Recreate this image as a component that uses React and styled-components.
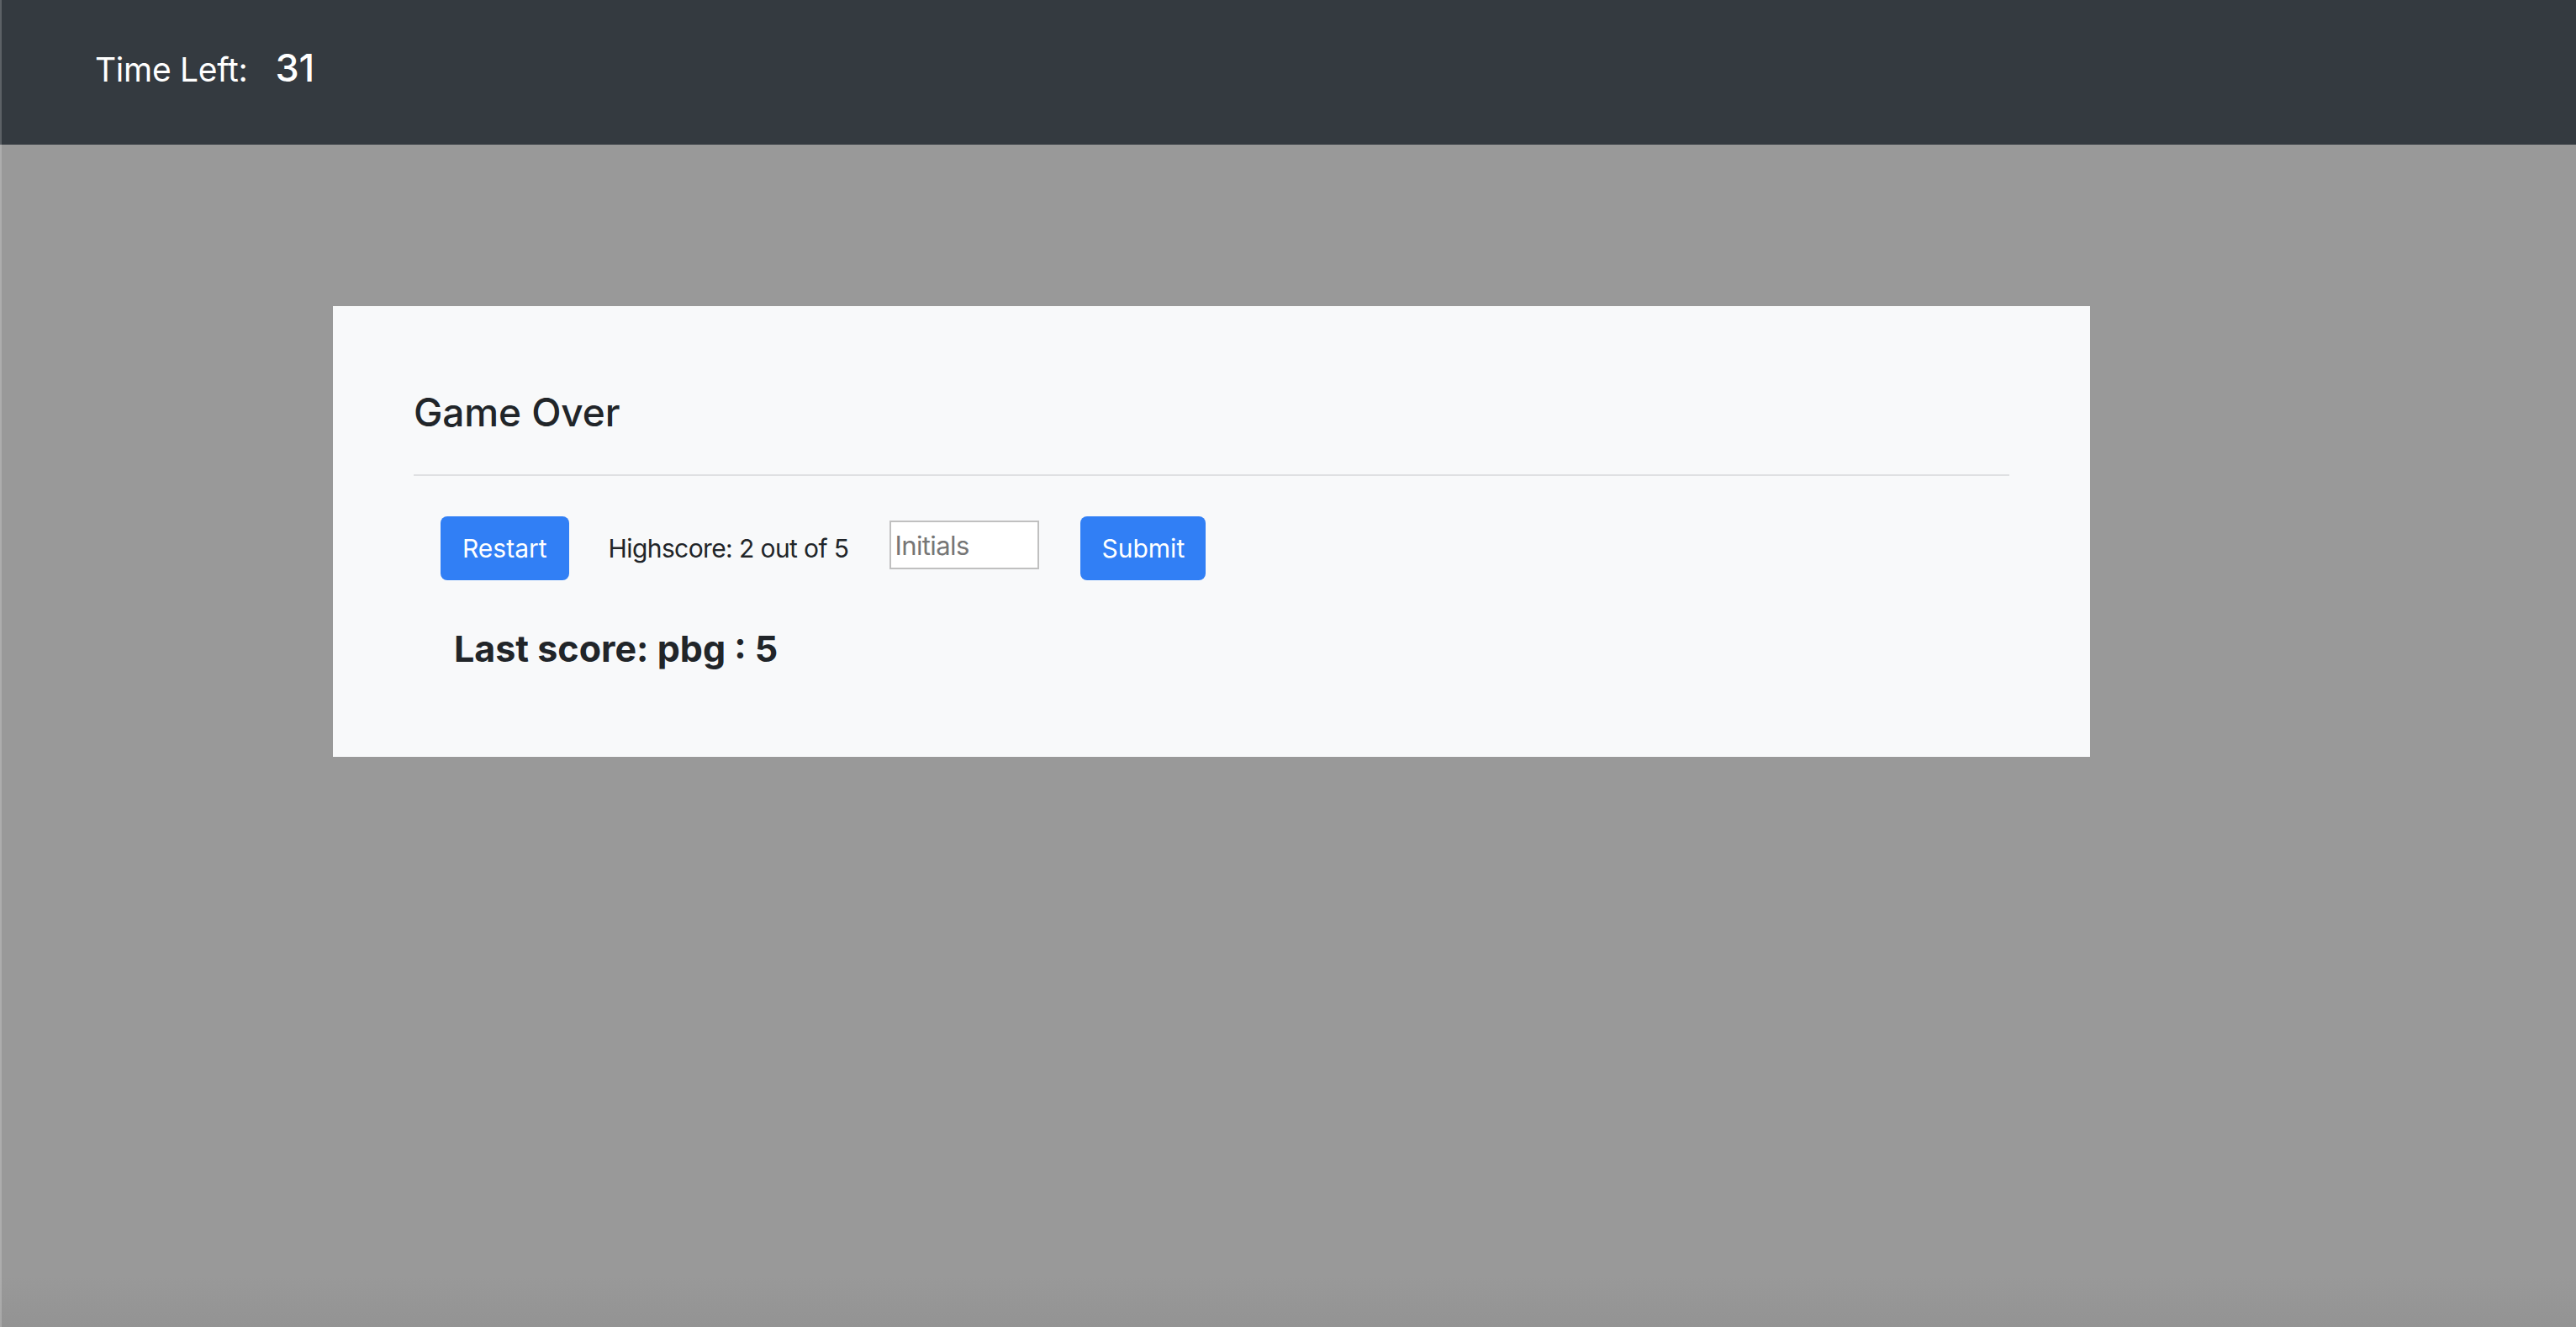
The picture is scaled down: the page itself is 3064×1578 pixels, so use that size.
import React from "react";
import styled, { createGlobalStyle } from "styled-components";

const GlobalStyle = createGlobalStyle`
  html, body {
    margin: 0;
    padding: 0;
  }
  body {
    font-family: Inter, "Liberation Sans", sans-serif;
    background-color: #999999;
    color: #212529;
  }
  * {
    box-sizing: border-box;
  }
`;

const Page = styled.div`
  position: relative;
  display: flex;
  flex-direction: column;
  min-height: 100vh;
  background: linear-gradient(to bottom, #999999 calc(100% - 60px), #939393);
  &::after {
    content: "";
    position: absolute;
    left: 0;
    top: 0;
    bottom: 0;
    width: 2px;
    background: rgba(255, 255, 255, 0.2);
  }
`;

const TopBar = styled.header`
  display: flex;
  align-items: baseline;
  gap: 33px;
  height: 172px;
  padding: 53px 0 0 113px;
  background-color: #343a40;
  color: #ffffff;
`;

const TimerLabel = styled.span`
  font-size: 39px;
  line-height: 56px;
  letter-spacing: -0.3px;
`;

const TimerValue = styled.span`
  font-size: 45px;
  font-weight: 500;
  line-height: 56px;
`;

const Card = styled.section`
  width: 2090px;
  margin: 192px 0 0 396px;
  padding: 98px 96px 103px;
  background-color: #f8f9fa;
`;

const Title = styled.h4`
  margin: 0;
  font-size: 46px;
  font-weight: 500;
  line-height: 56px;
  letter-spacing: -0.1px;
`;

const Divider = styled.hr`
  margin: 46px 0 48px;
  border: 0;
  border-top: 2px solid #dfe0e2;
`;

const Controls = styled.div`
  display: flex;
  align-items: center;
  gap: 47px;
  height: 76px;
  padding-left: 32px;
`;

const Button = styled.button`
  height: 76px;
  padding: 0 ${(p) => p.$px || 26}px;
  border: 0;
  border-radius: 8px;
  background-color: #317ff5;
  color: #ffffff;
  font-family: inherit;
  font-size: 30px;
  line-height: 76px;
`;

const ScoreText = styled.span`
  font-size: 30px;
  line-height: 40px;
  letter-spacing: -0.6px;
`;

const InitialsInput = styled.input`
  width: 178px;
  height: 58px;
  margin: 0 2px 8px;
  padding: 0 4px;
  border: 2px solid #c0c0c0;
  background: #ffffff;
  font-family: inherit;
  font-size: 31px;
  color: #212529;
  &::placeholder {
    color: #767676;
    letter-spacing: -0.6px;
  }
`;

const LastScore = styled.h4`
  margin: 55px 0 0 48px;
  font-size: 43px;
  font-weight: 700;
  line-height: 52px;
`;

export default function App() {
  return (
    <>
      <GlobalStyle />
      <Page>
        <TopBar>
          <TimerLabel>Time Left:</TimerLabel>
          <TimerValue>31</TimerValue>
        </TopBar>
        <Card>
          <Title>Game Over</Title>
          <Divider />
          <Controls>
            <Button>Restart</Button>
            <ScoreText>Highscore: 2 out of 5</ScoreText>
            <InitialsInput placeholder="Initials" />
            <Button $px={25}>Submit</Button>
          </Controls>
          <LastScore>Last score: pbg : 5</LastScore>
        </Card>
      </Page>
    </>
  );
}
